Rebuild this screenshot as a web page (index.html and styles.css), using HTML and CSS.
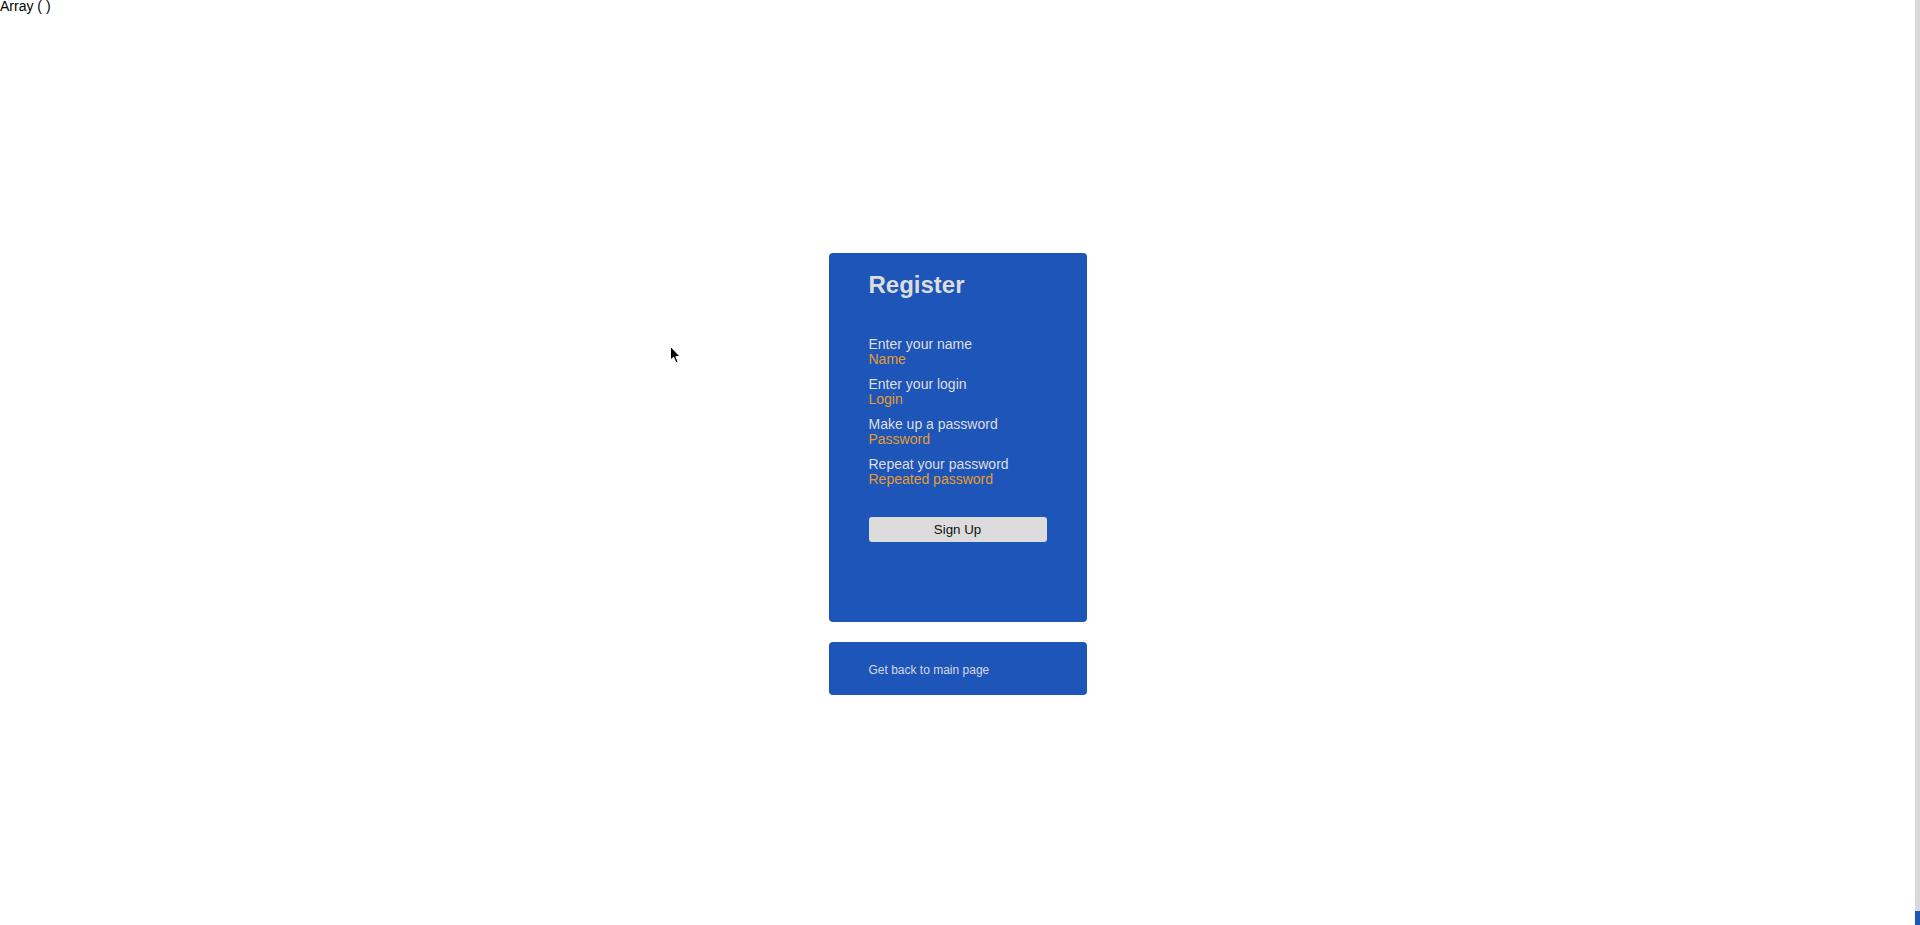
FILE: index.html
```html
<!DOCTYPE html>
<html lang="en">
<head>
<meta charset="utf-8">
<title>Register</title>
<link rel="stylesheet" href="styles.css">
</head>
<body>
<div class="page">
  <div class="dump">Array ( )</div>
  <main class="main">
    <form class="card register">
      <h2 class="title">Register</h2>
      <div class="field">
        <label class="label" for="name">Enter your name</label>
        <input class="input" id="name" type="text" placeholder="Name">
      </div>
      <div class="field">
        <label class="label" for="login">Enter your login</label>
        <input class="input" id="login" type="text" placeholder="Login">
      </div>
      <div class="field">
        <label class="label" for="pass">Make up a password</label>
        <input class="input" id="pass" type="password" placeholder="Password">
      </div>
      <div class="field">
        <label class="label" for="pass2">Repeat your password</label>
        <input class="input" id="pass2" type="password" placeholder="Repeated password">
      </div>
      <button class="submit" type="button">Sign Up</button>
    </form>
    <div class="card back">
      <a class="back-link" href="#">Get back to main page</a>
    </div>
  </main>
  <svg class="cursor" width="12" height="18" viewBox="0 0 12 18">
    <path d="M0.5 0.5 L0.5 14 L3.6 11.2 L6 16.8 L8.1 15.9 L5.8 10.5 L10 10.5 Z" fill="#000" stroke="#fff" stroke-width="1"/>
  </svg>
</div>
<div class="scrollbar">
  <div class="track"></div>
  <div class="thumb"></div>
</div>
</body>
</html>
```
FILE: styles.css
```css
html, body {
  margin: 0;
  padding: 0;
  height: 100%;
}
body {
  display: flex;
  background: #ffffff;
  font-family: "Liberation Sans", Arial, sans-serif;
  color: #000;
  overflow: hidden;
}
.page {
  flex: 1;
  position: relative;
  display: flex;
  flex-direction: column;
}
.dump {
  font-size: 14px;
  line-height: 12px;
  height: 12px;
}
.main {
  display: flex;
  flex-direction: column;
  align-items: center;
  padding-top: 241px;
}
.card {
  width: 258px;
  box-sizing: border-box;
  background: #1e55b8;
  border-radius: 4px;
  padding: 0 40px;
}
.register {
  padding-bottom: 80px;
  display: flex;
  flex-direction: column;
}
.title {
  margin: 18px 0 37px;
  font-size: 24px;
  line-height: 28px;
  font-weight: bold;
  color: #dcdcdc;
}
.field {
  display: flex;
  flex-direction: column;
  margin-bottom: 8px;
}
.label {
  font-size: 14px;
  line-height: 16px;
  color: #dedede;
}
.input {
  height: 16px;
  padding: 0;
  margin: -1px 0 1px;
  border: none;
  background: transparent;
  font-family: "Liberation Sans", Arial, sans-serif;
  font-size: 14px;
  line-height: 16px;
  color: #e59c2f;
  outline: none;
}
.input::placeholder {
  color: #e59c2f;
  opacity: 1;
}
.submit {
  margin-top: 21px;
  height: 25px;
  width: 100%;
  border: none;
  border-radius: 3px;
  background: #dcdcdc;
  color: #111;
  font-family: "Liberation Sans", Arial, sans-serif;
  font-size: 13.33px;
  padding: 0;
}
.back {
  margin-top: 20px;
  height: 53px;
  display: flex;
  align-items: center;
}
.back-link {
  padding-top: 2px;
  font-size: 12px;
  line-height: 14px;
  color: #d6d9e6;
  text-decoration: none;
}
.cursor {
  position: absolute;
  left: 670px;
  top: 346px;
}
.scrollbar {
  width: 5px;
  display: flex;
  flex-direction: column;
}
.track {
  flex: 1;
  background: #d9d9d9;
}
.thumb {
  height: 14px;
  background: #1e55b8;
}
```
